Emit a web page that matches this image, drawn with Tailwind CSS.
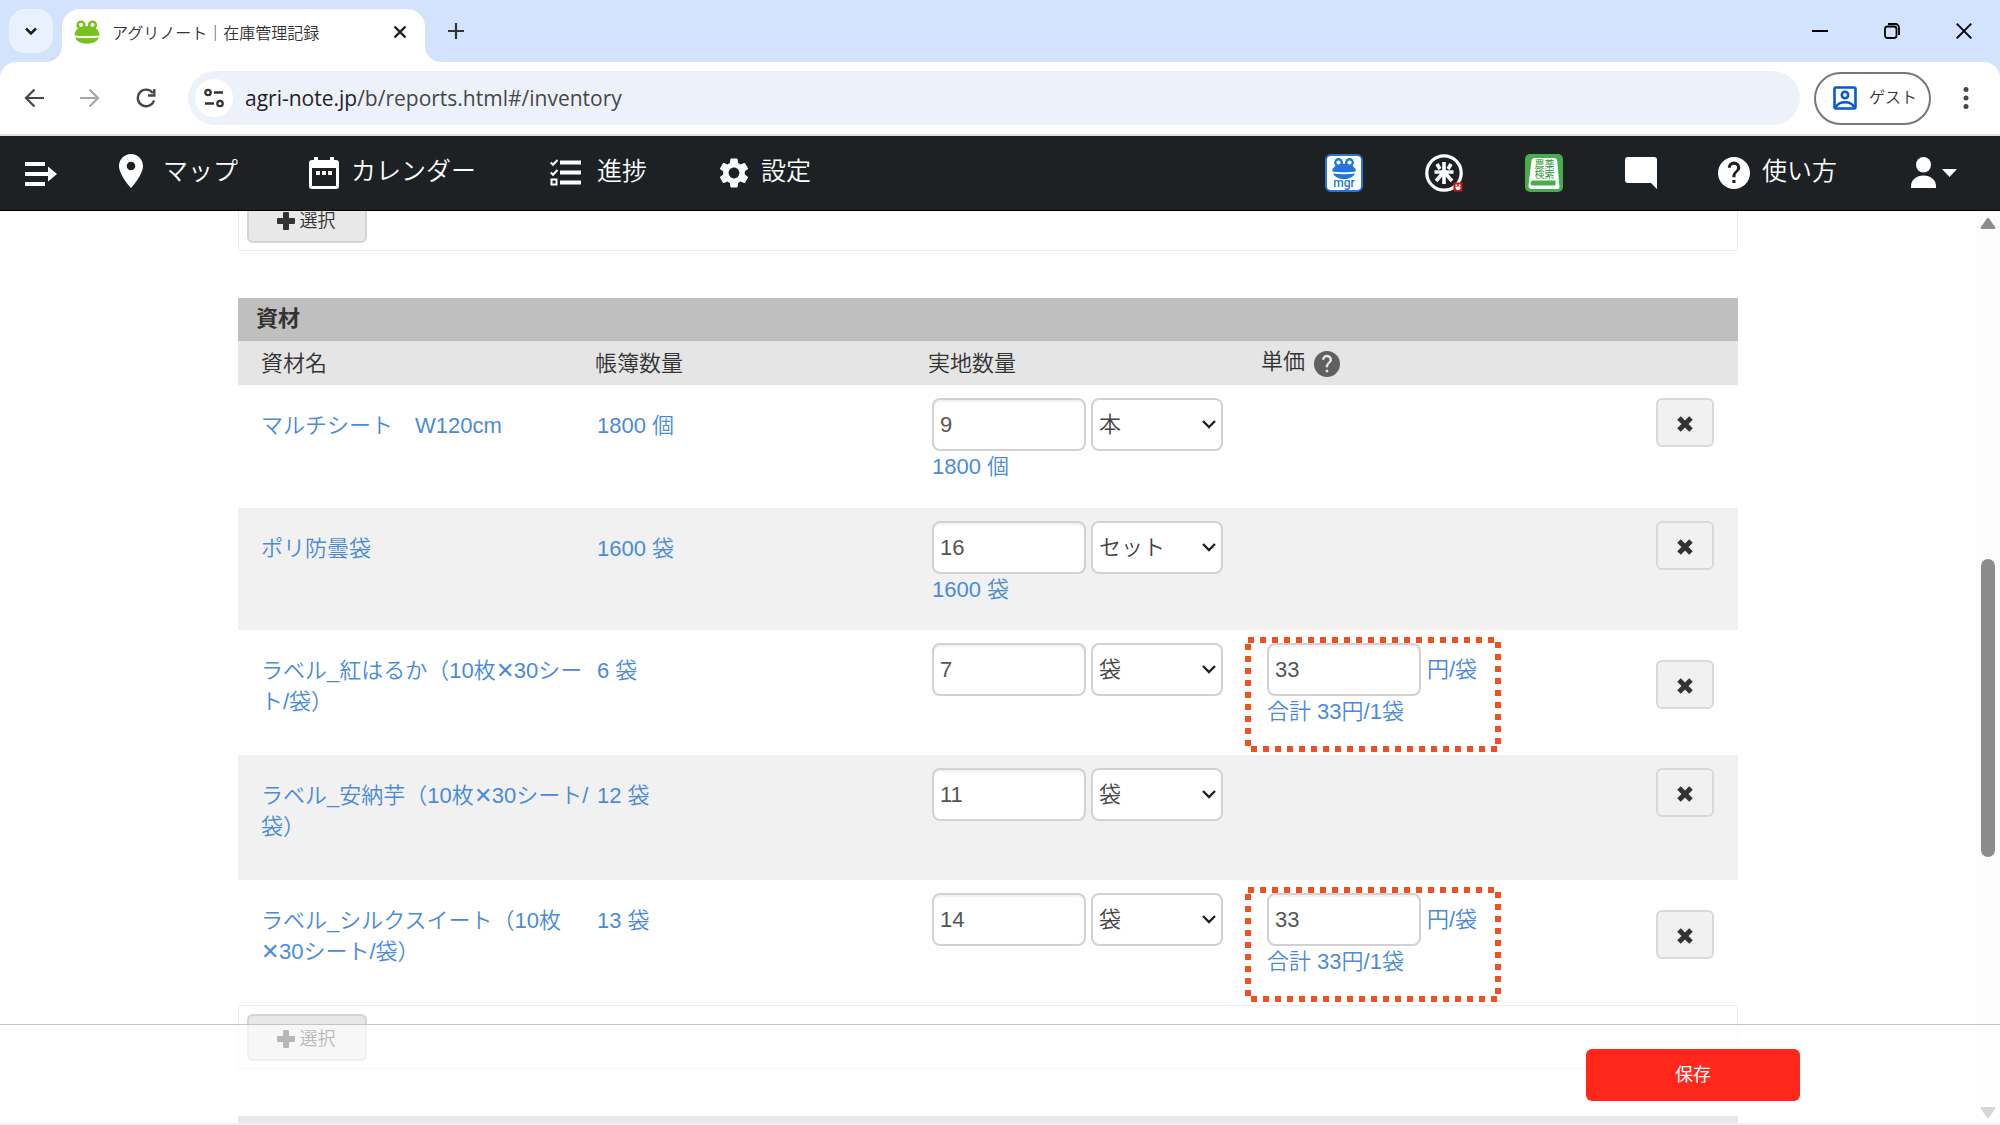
<!DOCTYPE html>
<html lang="ja">
  <head>
    <meta charset="UTF-8" />
    <meta name="viewport" content="width=device-width, initial-scale=1.0" />
    <title>アグリノート｜在庫管理記録</title>
    <script src="https://cdn.jsdelivr.net/npm/@tailwindcss/browser@4"></script>
  </head>
  <body class="h-screen flex flex-col overflow-hidden bg-white text-[#333] text-[22px] leading-[31px] font-[350] font-['Liberation_Sans','Noto_Sans_CJK_JP',sans-serif]">
    <!-- browser tabs -->
    <div class="flex h-[62px] shrink-0 bg-[#d3e3fd] pl-[9px]">
      <button class="mt-[9px] flex size-11 items-center justify-center rounded-2xl bg-[#e9f1fe]" aria-label="タブを検索">
        <svg class="size-4" viewBox="0 0 16 16" fill="none" stroke="#1f1f1f" stroke-width="2.6"><path d="M3 5.500l5 5 5-5" /></svg>
      </button>
      <div class="relative mt-[9px] ml-[9px] flex w-[363px] items-center rounded-t-[18px] bg-white pr-[18px] pb-2 pl-3">
        <svg class="absolute bottom-0 -left-4 size-4" viewBox="0 0 16 16" fill="#fff"><path d="M16 0v16H0A16 16 0 0016 0z" /></svg>
        <svg class="absolute bottom-0 -right-4 size-4" viewBox="0 0 16 16" fill="#fff"><path d="M0 0v16h16A16 16 0 010 0z" /></svg>
        <svg class="w-[26px] h-6 shrink-0" viewBox="0 0 26 24">
          <g fill="#7ac11f">
            <circle cx="7" cy="5" r="4.600" /><circle cx="18.500" cy="5" r="4.600" />
            <path d="M13 6c7.500 0 12.500 3.500 12.500 9.500-7 .8-18 .8-25 0C.5 9.500 5.500 6 13 6z" />
            <path d="M1 17.300c7 1.200 17 1.200 24 0-1.500 4.500-6.300 6.400-12 6.400S2.500 21.800 1 17.300z" />
          </g>
          <circle cx="7" cy="4.800" r="2.100" fill="#fff" /><circle cx="18.500" cy="4.800" r="2.100" fill="#fff" />
        </svg>
        <span class="ml-3 flex-1 text-base whitespace-nowrap font-['Noto_Sans_CJK_JP',sans-serif]">アグリノート｜在庫管理記録</span>
        <button aria-label="閉じる">
          <svg class="size-[14px]" viewBox="0 0 14 14" stroke="#1f1f1f" stroke-width="2.400"><path d="M1.500 1.500l11 11M12.500 1.500l-11 11" /></svg>
        </button>
      </div>
      <button class="ml-[22px]" aria-label="新しいタブ">
        <svg class="size-[18px]" viewBox="0 0 18 18" stroke="#333" stroke-width="2.200"><path d="M9 1v16M1 9h16" /></svg>
      </button>
      <div class="ml-auto flex items-center gap-14 pr-7">
        <button aria-label="最小化"><svg class="size-4" viewBox="0 0 16 16" stroke="#000" stroke-width="2"><path d="M0 8h16" /></svg></button>
        <button aria-label="元に戻す"><svg class="size-4" viewBox="0 0 16 16" fill="none" stroke="#000" stroke-width="1.800"><rect x="1" y="3.500" width="11.500" height="11.500" rx="2.500" /><path d="M4 1h7.500A3.500 3.500 0 0115 4.500V12" /></svg></button>
        <button aria-label="ウィンドウを閉じる"><svg class="size-4" viewBox="0 0 16 16" stroke="#000" stroke-width="1.900"><path d="M.7.7l14.600 14.600M15.300.7L.7 15.300" /></svg></button>
      </div>
    </div>

    <!-- toolbar -->
    <div class="shrink-0 bg-[#d3e3fd]">
      <div class="flex h-[74px] items-center rounded-t-2xl border-b-2 border-[#dfe1e5] bg-white pr-[31px] pl-6">
        <button aria-label="戻る"><svg class="size-5" viewBox="0 0 20 20" fill="none" stroke="#474747" stroke-width="2.200"><path d="M20 10H2M10.500 1.500L2 10l8.500 8.500" /></svg></button>
        <button class="ml-9" aria-label="進む"><svg class="size-5" viewBox="0 0 20 20" fill="none" stroke="#a8a8a8" stroke-width="2.200"><path d="M0 10h18M9.500 1.500L18 10l-8.500 8.500" /></svg></button>
        <button class="ml-9" aria-label="再読み込み"><svg class="size-5" viewBox="0 0 20 20" fill="none" stroke="#474747" stroke-width="2.400"><path d="M18 12.500A8.300 8.300 0 1116.800 5M18.300 1v6.500H12" /></svg></button>
        <div class="ml-8 flex h-[54px] flex-1 items-center gap-3 rounded-full bg-[#ecf1fa] px-[7px]">
          <button class="flex size-[38px] shrink-0 items-center justify-center rounded-full bg-white" aria-label="サイト情報">
            <svg class="size-5" viewBox="0 0 20 20" fill="none" stroke="#333" stroke-width="2.300"><circle cx="4" cy="4.500" r="2.700" /><path d="M10 4.500h9M1 15.500h9" /><circle cx="16" cy="15.500" r="2.700" /></svg>
          </button>
          <span class="text-[21px] font-normal text-[#474747] font-['Open_Sans',sans-serif]"><span class="text-[#1f1f1f]">agri-note.jp</span>/b/reports.html#/inventory</span>
        </div>
        <button class="ml-[14px] flex h-[53px] w-[117px] items-center gap-3 rounded-full border-2 border-[#777] pl-[17px] text-base whitespace-nowrap">
          <svg class="h-6 w-6 shrink-0" viewBox="0 0 24 24" fill="none" stroke="#0b57d0" stroke-width="2.600"><rect x="1.500" y="1.500" width="21" height="21" rx="1.500" /><circle cx="12" cy="9" r="3.200" /><path d="M3 21c1.500-3.500 5-4.800 9-4.800s7.500 1.300 9 4.800" /></svg>
          ゲスト
        </button>
        <button class="ml-8" aria-label="メニュー"><svg class="h-6 w-[6px]" viewBox="0 0 6 24" fill="#474747"><circle cx="3" cy="3.500" r="2.500" /><circle cx="3" cy="12" r="2.500" /><circle cx="3" cy="20.500" r="2.500" /></svg></button>
      </div>
    </div>

    <!-- site navigation -->
    <nav class="flex h-[75px] shrink-0 items-center border-b border-black bg-[#1d2124] pr-[43px] pb-[5px] pl-[25px] text-[25px] leading-9 whitespace-nowrap text-white">
      <button aria-label="サイドメニュー"><svg class="mt-1.5 h-6 w-8" viewBox="0 0 32 24" fill="#fff"><path d="M0 0h20v4H0zM0 10h23V4.500L32 12l-9 7.500V14H0zM0 20h20v4H0z" /></svg></button>
      <a href="#" class="ml-[62px] flex items-center gap-5">
        <svg class="h-[34px] w-6" viewBox="0 0 24 34" fill="#fff"><path fill-rule="evenodd" d="M12 0C5.400 0 0 5.300 0 12c0 9 12 22 12 22s12-13 12-22C24 5.300 18.600 0 12 0zm0 16.300a4.300 4.300 0 110-8.600 4.300 4.300 0 010 8.600z" /></svg>
        マップ
      </a>
      <a href="#" class="ml-[71px] flex items-center gap-3">
        <svg class="mt-1 h-8 w-[30px]" viewBox="0 0 30 32"><path fill="#fff" fill-rule="evenodd" d="M5 0h4v3h12V0h4v3h2a3 3 0 013 3v23a3 3 0 01-3 3H3a3 3 0 01-3-3V6a3 3 0 013-3h2zM3 11v18h24V11z" /><path fill="#fff" d="M7 14h4v4H7zM13 14h4v4h-4zM19 14h4v4h-4z" /></svg>
        カレンダー
      </a>
      <a href="#" class="ml-[74px] flex items-center gap-4">
        <svg class="mt-1 h-[27px] w-[31px]" viewBox="0 0 31 27" fill="none" stroke="#fff"><path stroke-width="4" d="M10 3.500h21M10 13.500h21M10 23.500h21" /><path stroke-width="2" d="M.7 3.500l2.300 2.300L7.500 1M.7 13.500l2.300 2.300L7.500 11M1.500 20.500h5v5h-5z" /></svg>
        進捗
      </a>
      <a href="#" class="ml-[72px] flex items-center gap-3">
        <svg class="mt-1 size-9 -mx-[3px]" viewBox="0 0 24 24" fill="#fff"><path d="M19.140 12.940c.04-.3.060-.61.060-.94 0-.32-.02-.64-.07-.94l2.030-1.580a.49.490 0 00.12-.61l-1.920-3.320a.488.488 0 00-.59-.22l-2.390.96c-.5-.38-1.030-.7-1.620-.94l-.36-2.540a.484.484 0 00-.48-.41h-3.840c-.24 0-.43.170-.47.410l-.36 2.540c-.59.240-1.130.570-1.620.940l-2.390-.96c-.22-.08-.47 0-.59.220L2.740 8.870c-.12.210-.08.470.12.610l2.030 1.580c-.05.300-.09.630-.09.940s.02.640.070.940l-2.030 1.580a.49.490 0 00-.12.610l1.920 3.320c.12.220.370.290.590.220l2.390-.96c.5.380 1.030.7 1.620.940l.36 2.540c.05.240.240.410.480.410h3.840c.24 0 .44-.17.470-.41l.36-2.540c.59-.24 1.130-.56 1.620-.94l2.390.96c.22.080.470 0 .59-.22l1.920-3.320c.12-.22.070-.47-.12-.61l-2.010-1.580zM12 15.600A3.610 3.610 0 018.400 12c0-1.980 1.620-3.600 3.600-3.600s3.600 1.620 3.600 3.600-1.620 3.600-3.600 3.600z" /></svg>
        設定
      </a>

      <div class="ml-auto flex items-center">
        <a href="#" aria-label="mgr">
          <svg class="mt-1 size-[38px]" viewBox="0 0 38 38">
            <rect x="1" y="1" width="36" height="36" rx="5" fill="#fff" stroke="#2375d8" stroke-width="2" />
            <g fill="#2375d8">
              <circle cx="13.500" cy="8.500" r="4.400" /><circle cx="24.500" cy="8.500" r="4.400" />
              <path d="M19 9.500c7 0 11.500 3.500 12 8-7 .9-17 .9-24 0 .5-4.500 5-8 12-8z" />
              <path d="M8 19.500c7 1 15 1 22 0-1.500 3.500-6 5.500-11 5.500s-9.500-2-11-5.500z" />
            </g>
            <circle cx="13.500" cy="8.500" r="2.100" fill="#fff" /><circle cx="24.500" cy="8.500" r="2.100" fill="#fff" />
            <text x="19" y="33" text-anchor="middle" font-size="12" font-weight="500" fill="#2375d8" font-family="Roboto">mgr</text>
          </svg>
        </a>
        <a href="#" class="ml-[62px]" aria-label="米">
          <svg class="mt-1 size-[38px]" viewBox="0 0 38 38">
            <circle cx="19" cy="19" r="17.200" fill="none" stroke="#fff" stroke-width="3.200" />
            <path d="M19 8v22M9.500 18h19M12 10l3 5M26 10l-3 5M17.500 19.500L11 27M20.500 19.500L27 27" stroke="#fff" stroke-width="3.600" />
            <rect x="28.500" y="28.500" width="9" height="9" rx="1" fill="#c8141e" /><path d="M30.500 32.500h5v1a2.500 2.500 0 01-5 0zM30.500 30.500h1.800v1.500h-1.800zM33.700 30.500h1.800v1.500h-1.800z" fill="#fff" />
          </svg>
        </a>
        <a href="#" class="ml-[62px]" aria-label="農薬検索">
          <svg class="mt-1 size-[38px]" viewBox="0 0 38 38">
            <rect width="38" height="38" rx="5" fill="#47ad4d" />
            <path d="M9.500 4h19.500c2 0 3 1 3.200 3L34.500 33c.1 1.300-.6 2-2 2H7c-2.500 0-3.800-1.500-3.500-4L6.500 7c.2-2 1.200-3 3-3z" fill="#fff" />
            <path d="M8 26.500h22.500v5H8a2.500 2.500 0 010-5z" fill="#47ad4d" />
            <text x="19.500" y="14" text-anchor="middle" font-size="10" font-weight="400" fill="#2f9a36" font-family="Noto Sans CJK JP">農薬</text>
            <text x="19.500" y="24" text-anchor="middle" font-size="10" font-weight="400" fill="#2f9a36" font-family="Noto Sans CJK JP">検索</text>
          </svg>
        </a>
        <a href="#" class="ml-[62px]" aria-label="メッセージ"><svg class="mt-1 size-8" viewBox="0 0 32 32" fill="#fff"><path d="M3 0h26a3 3 0 013 3v29l-6-6H3a3 3 0 01-3-3V3a3 3 0 013-3z" /></svg></a>
        <a href="#" class="ml-[61px] flex items-center gap-3">
          <svg class="mt-1 size-8" viewBox="0 0 24 24"><circle cx="12" cy="12" r="12" fill="#fff" /><path d="M13.100 19.500h-2.300v-2.300h2.300zm2.400-9l-1.100 1.100c-.9.900-1.300 1.600-1.300 3.500h-2.300v-.6c0-1.300.5-2.400 1.400-3.300l1.400-1.500c.4-.4.7-1 .7-1.600a2.350 2.350 0 10-4.700 0H7.300a4.700 4.700 0 119.400 0c0 .9-.5 1.700-1.200 2.400z" fill="#1d2124" /></svg>
          使い方
        </a>
        <button class="ml-[74px]" aria-label="アカウント">
          <svg class="mt-1 h-[31px] w-[46px]" viewBox="0 0 46 31" fill="#fff"><ellipse cx="12.500" cy="7.700" rx="7.500" ry="7.700" /><path d="M0 31v-2c0-6 5.500-10.500 12.500-10.500S25 23 25 29v2zM31 12h15l-7.500 8z" /></svg>
        </button>
      </div>
    </nav>

    <main class="relative mb-0.5 flex min-h-0 flex-1 overflow-hidden">
      <div class="min-w-0 flex-1 px-8">
        <div class="mx-auto -mt-6 flex max-w-[1500px] flex-col">
          <div class="h-[64px] border border-[#ececec] p-2">
            <button class="flex h-[47px] w-[120px] items-center justify-center gap-[5px] rounded-md border-2 border-[#d4d4d4] bg-[#e8e8e8] pt-0.5 pr-0.5 text-lg">
              <svg class="size-[18px]" viewBox="0 0 18 18" fill="#333"><path d="M7 0h4a1 1 0 011 1v5h5a1 1 0 011 1v4a1 1 0 01-1 1h-5v5a1 1 0 01-1 1H7a1 1 0 01-1-1v-5H1a1 1 0 01-1-1V7a1 1 0 011-1h5V1a1 1 0 011-1z" /></svg>
              選択
            </button>
          </div>

          <table class="mt-[47px] w-full table-fixed border-collapse text-left">
            <colgroup>
              <col class="w-[357px]" />
              <col class="w-[333px]" />
              <col class="w-[333px]" />
              <col />
              <col class="w-[100px]" />
            </colgroup>
            <thead>
              <tr class="h-[43px] bg-[#bfbfbf]">
                <th colspan="5" class="pb-0.5 pl-[18px] font-bold">資材</th>
              </tr>
              <tr class="h-11 bg-[#e5e5e5]">
                <th class="pl-[23px] font-[350]">資材名</th>
                <th class="font-[350]">帳簿数量</th>
                <th class="font-[350]">実地数量</th>
                <th class="pb-1 font-[350]">
                  <div class="flex items-start gap-[9px]">
                    単価
                    <svg class="mt-[5px] size-[26px]" viewBox="0 0 24 24"><circle cx="12" cy="12" r="12" fill="#606060" /><path d="M13.100 19.500h-2.300v-2.300h2.300zm2.400-9l-1.100 1.100c-.9.900-1.300 1.600-1.300 3.500h-2.300v-.6c0-1.300.5-2.400 1.400-3.300l1.400-1.500c.4-.4.7-1 .7-1.600a2.350 2.350 0 10-4.700 0H7.300a4.700 4.700 0 119.400 0c0 .9-.5 1.700-1.200 2.400z" fill="#e5e5e5" /></svg>
                  </div>
                </th>
                <th></th>
              </tr>
            </thead>
            <tbody id="items" class="align-top text-[#4a8bd8]"></tbody>
          </table>

          <div class="h-[64px] border border-[#ececec] p-2">
            <button class="flex h-[47px] w-[120px] items-center justify-center gap-[5px] rounded-md border-2 border-[#d4d4d4] bg-[#e8e8e8] pt-0.5 pr-0.5 text-lg">
              <svg class="size-[18px]" viewBox="0 0 18 18" fill="#333"><path d="M7 0h4a1 1 0 011 1v5h5a1 1 0 011 1v4a1 1 0 01-1 1h-5v5a1 1 0 01-1 1H7a1 1 0 01-1-1v-5H1a1 1 0 01-1-1V7a1 1 0 011-1h5V1a1 1 0 011-1z" /></svg>
              選択
            </button>
          </div>
          <div class="mt-[47px] h-[43px] bg-[#bfbfbf]"></div>
        </div>
      </div>

      <!-- scrollbar -->
      <div class="flex w-6 shrink-0 flex-col items-center bg-[#fcfcfc] pt-[7px]">
        <svg class="h-[11px] w-4" viewBox="0 0 16 11" fill="#8b8b8b"><path d="M6.500 1L1 9c-.6 1-.2 2 1 2h12c1.200 0 1.600-1 1-2L9.500 1c-.8-1.200-2.200-1.200-3 0z" /></svg>
        <div class="mt-[330px] h-[298px] w-[14px] rounded-full bg-[#8b8b8b]"></div>
        <svg class="mt-auto mb-[5px] h-[11px] w-4 rotate-180" viewBox="0 0 16 11" fill="#8b8b8b"><path d="M6.500 1L1 9c-.6 1-.2 2 1 2h12c1.200 0 1.600-1 1-2L9.500 1c-.8-1.200-2.200-1.200-3 0z" /></svg>
      </div>

      <!-- save bar stays over the scrolled list -->
      <div class="absolute inset-x-0 bottom-0 flex h-[99px] justify-end border-t border-[#c4c4c4] bg-white/65 pt-6 pr-[200px]">
        <button class="h-[52px] w-[214px] rounded-md bg-[#ff261b] text-lg font-normal text-white">保存</button>
      </div>
    </main>
    <div class="fixed inset-x-0 bottom-0 h-0.5 bg-[#fbeeea]"></div>

    <script>
      const items = [
        { name: "マルチシート　W120cm", book: "1800 個", count: 9, unit: "本", total: "1800 個", row: "h-[123px]" },
        { name: "ポリ防曇袋", book: "1600 袋", count: 16, unit: "セット", total: "1600 袋", row: "h-[122px] bg-[#f1f1f1]" },
        { name: "ラベル_紅はるか（10枚✕30シート/袋）", book: "6 袋", count: 7, unit: "袋", price: 33, row: "h-[125px]" },
        { name: "ラベル_安納芋（10枚✕30シート/袋）", book: "12 袋", count: 11, unit: "袋", row: "h-[125px] bg-[#f1f1f1]" },
        { name: "ラベル_シルクスイート（10枚✕30シート/袋）", book: "13 袋", count: 14, unit: "袋", price: 33, row: "h-[125px]" },
      ];

      const inputClass =
        "h-[53px] w-[154px] rounded-lg border-2 border-[#d2d2d2] bg-white pl-1.5 text-[#555] shadow-[inset_0_2px_2px_rgba(0,0,0,0.06)]";

      function priceCell(item) {
        if (!item.price) return "";
        return `
          <div class="relative pl-1.5 pt-[13px]">
            <svg class="absolute -left-4 top-[7px] h-[115px] w-[256px]" fill="none" stroke="#f04e23" stroke-width="6" stroke-dasharray="6 6"><rect x="3" y="3" width="250" height="109" /></svg>
            <label class="flex items-center gap-1.5">
              <input type="text" value="${item.price}" class="${inputClass}" />円/袋
            </label>
            <p>合計 ${item.price}円/1袋</p>
          </div>`;
      }

      document.getElementById("items").innerHTML = items
        .map(
          (item) => `
        <tr class="${item.row}">
          <td class="pl-[23px] pt-[25px]">${item.name}</td>
          <td class="pl-0.5 pt-[25px]">${item.book}</td>
          <td class="pl-1 pt-[13px]">
            <div class="flex gap-[5px]">
              <input type="text" aria-label="実地数量" value="${item.count}" class="${inputClass}" />
              <div class="relative">
                <select aria-label="単位" class="h-[53px] w-[132px] appearance-none rounded-lg border-2 border-[#d2d2d2] bg-white pl-1.5 text-[#444]"><option>${item.unit}</option></select>
                <svg class="pointer-events-none absolute right-1.5 top-[18px] size-4" viewBox="0 0 16 16" fill="none" stroke="#222" stroke-width="2.400"><path d="M2 5l6 6 6-6" /></svg>
              </div>
            </div>
            <p>${item.total || ""}</p>
          </td>
          <td>${priceCell(item)}</td>
          <td class="${item.price ? "pt-[30px]" : "pt-[13px]"}">
            <button aria-label="削除" class="ml-[18px] flex h-[49px] w-[58px] items-center justify-center rounded-md border-2 border-[#d9d9d9] bg-[#f1f1f1]">
              <svg class="mt-0.5 size-4" viewBox="0 0 16 16" stroke="#333" stroke-width="5"><path d="M2 2l12 12M14 2L2 14" /></svg>
            </button>
          </td>
        </tr>`
        )
        .join("");
    </script>
  </body>
</html>
